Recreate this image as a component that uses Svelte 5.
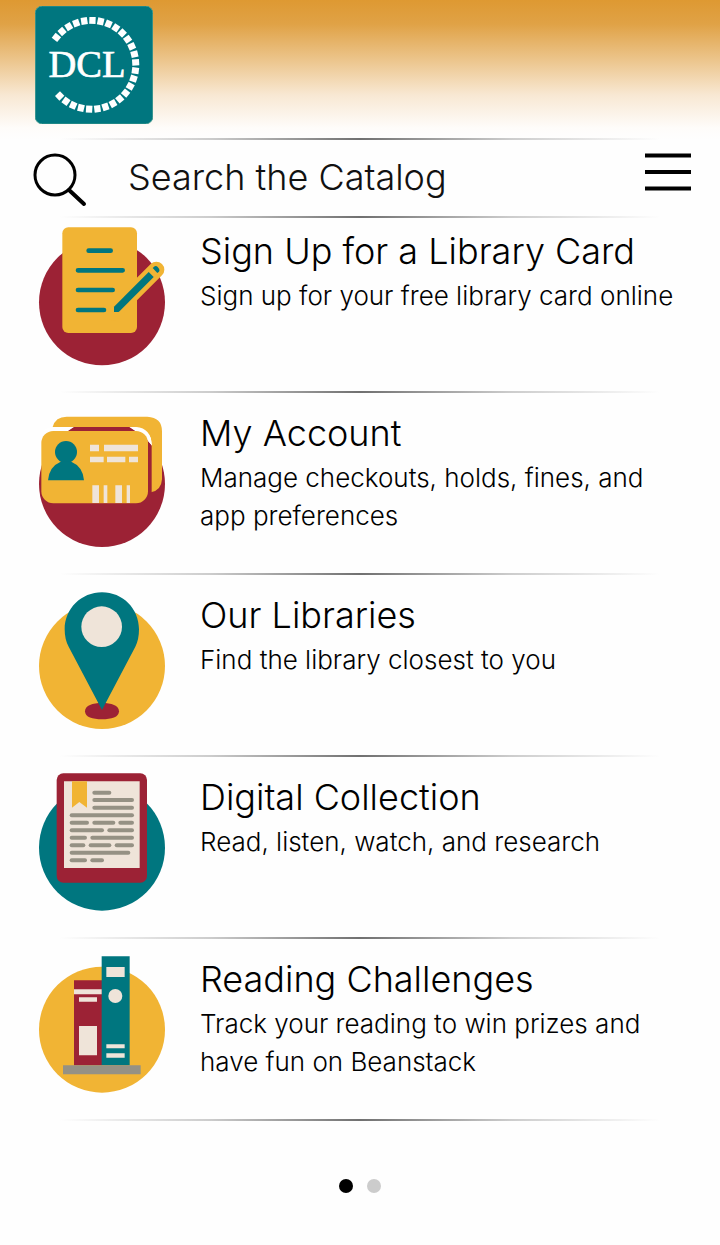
<script>
  const items = [
    { icon: 'form', title: 'Sign Up for a Library Card', text: 'Sign up for your free library card online' },
    { icon: 'cards', title: 'My Account', text: 'Manage checkouts, holds, fines, and app preferences' },
    { icon: 'pin', title: 'Our Libraries', text: 'Find the library closest to you' },
    { icon: 'reader', title: 'Digital Collection', text: 'Read, listen, watch, and research' },
    { icon: 'books', title: 'Reading Challenges', text: 'Track your reading to win prizes and have fun on Beanstack' }
  ];
  const discs = { form: '#9c2235', cards: '#9c2235', pin: '#f1b434', reader: '#00767f', books: '#f1b434' };

  const ring = Array.from({ length: 27 }, (_, i) => -141.7 + i * 10.67);

  const lines = [
    [193, 82, 238], [193, 104, 306], [193, 127, 306], [125, 150, 306],
    [125, 172, 171], [193, 172, 250], [271, 172, 306],
    [125, 195, 216], [238, 195, 306],
    [125, 217, 165], [187, 217, 306],
    [125, 240, 160], [182, 240, 238], [260, 240, 306],
    [125, 262, 295], [125, 285, 165], [187, 285, 216]
  ];
</script>

<div class="page">
  <header>
    <a class="logo" href="#home" aria-label="DCL home">
      <svg viewBox="45 16 354 355" width="118" height="118">
        <rect x="45" y="16" width="354" height="355" rx="22" fill="#00767f" stroke="#3f9a90" stroke-width="3" />
        {#each ring as a}
          <rect x="337" y="183" width="21" height="19" fill="#fff" transform="rotate({a} 214 193)" />
        {/each}
        <text x="201" y="230" text-anchor="middle" fill="#fff" stroke="#fff" stroke-width="2">DCL</text>
      </svg>
    </a>
  </header>

  <div class="rule"></div>
  <form class="search" role="search" onsubmit={(e) => e.preventDefault()}>
    <button class="find" aria-label="Search">
      <svg viewBox="0 0 54 54" width="54" height="54" fill="none" stroke="#000">
        <circle cx="22" cy="22" r="20" stroke-width="3" />
        <path d="M36 37L51 51" stroke-width="4" stroke-linecap="round" />
      </svg>
    </button>
    <input type="text" aria-label="Search the Catalog" placeholder="Search the Catalog" />
    <button class="menu" type="button" aria-label="Menu">
      <svg viewBox="0 0 46 38" width="46" height="38" stroke="#000" stroke-width="4">
        <path d="M0 2.500H46M0 19H46M0 35.500H46" />
      </svg>
    </button>
  </form>
  <div class="rule"></div>

  <main>
    {#each items as item}
      <a class="item" href="#{item.icon}">
        {#if item.icon === 'form'}
          <svg class="icon" viewBox="0 0 450 450">
            <circle cx="216" cy="247" r="189" fill={discs.form} />
            <rect x="97" y="22" width="224" height="317" rx="18" fill="#f1b434" />
            <path d="M250 278L379 149" stroke="#f1b434" stroke-width="48" stroke-linecap="round" />
            <g stroke="#00767f" stroke-width="14" stroke-linecap="round">
              <path d="M176 92H242M144 151H278M144 210H248M144 270H222" />
            </g>
            <path d="M252 260L356 156L371 171L267 275Q265 276 262 276H252Z" fill="#00767f" />
            <path d="M368 144L374 139Q379 137 383 141L387 146Q390 151 387 155L382 159Z" fill="#00767f" />
          </svg>
        {:else if item.icon === 'cards'}
          <svg class="icon" viewBox="0 -10 450 450">
            <circle cx="216" cy="236" r="189" fill={discs.cards} />
            <path d="M68 65Q76 34 110 34H352Q396 36 396 78V222Q394 255 363 261V100Q350 66 300 65Z" fill="#f1b434" />
            <path d="M40 78Q52 66 68 65H132L115 78Z" fill="#fff" />
            <path d="M132 65H300L318 78H113Z" fill="#9c2235" />
            <path d="M298 65H318Q364 68 366 122L352 105L316 77Z" fill="#fff" />
            <path d="M350 103L365 121V262L350 270Z" fill="#9c2235" />
            <rect x="34" y="77" width="320" height="217" rx="36" fill="#f1b434" />
            <circle cx="108" cy="140" r="33" fill="#00767f" />
            <path d="M54 225Q57 184 92 169H124Q159 184 162 225Z" fill="#00767f" />
            <path d="M180 118h27v20h-27zM222 118h102v20H222zM180 154h41v17h-41zM231 154h55v17h-55zM297 154h27v17h-27zM187 240h20v53h-20zM221 240h11v53h-11zM256 240h20v53h-20zM290 240h10v53h-10z" fill="#efe4d9" />
          </svg>
        {:else if item.icon === 'pin'}
          <svg class="icon" viewBox="0 -4 450 450">
            <circle cx="216" cy="242" r="189" fill={discs.pin} />
            <path d="M165 378C165 360 188 353 216 353S267 360 267 378S244 402 216 402S165 396 165 378Z" fill="#9c2235" />
            <path d="M216 374L116 184Q104 163 104 132C104 70 154 21 216 21S327 70 327 132Q327 163 316 184Z" fill="#00767f" />
            <circle cx="215" cy="124" r="61" fill="#efe4d9" />
          </svg>
        {:else if item.icon === 'reader'}
          <svg class="icon" viewBox="0 2 450 450">
            <circle cx="216" cy="247" r="189" fill={discs.reader} />
            <rect x="80" y="24" width="271" height="328" rx="20" fill="#9c2235" />
            <path d="M102 48H329V308H102Z" fill="#efe4d9" />
            <path d="M126 48H171V127L148 110L126 127Z" fill="#f1b434" />
            <g stroke="#959184" stroke-width="12" stroke-linecap="round">
              {#each lines as [x, y, x2]}
                <path d="M{x} {y}H{x2}" />
              {/each}
            </g>
          </svg>
        {:else}
          <svg class="icon" viewBox="0 5 450 450">
            <circle cx="216" cy="250" r="189" fill={discs.books} />
            <path d="M132 102H216V357H132Z" fill="#9c2235" />
            <path d="M215 30H299V357H215Z" fill="#00767f" />
            <path d="M99 357H332V384H99Z" fill="#959184" />
            <path d="M132 129h83v15h-83zM147 153h54v13h-54zM147 239h54v88h-54zM229 62h55v30h-55zM229 294h55v12h-55zM229 321h55v13h-55z" fill="#efe4d9" />
            <circle cx="256" cy="149" r="21" fill="#efe4d9" />
          </svg>
        {/if}
        <div class="copy">
          <h2>{item.title}</h2>
          <p>{item.text}</p>
        </div>
      </a>
      <div class="rule"></div>
    {/each}
  </main>

  <nav class="dots" aria-label="Pages">
    <button class="on" aria-label="Page 1"></button>
    <button aria-label="Page 2"></button>
  </nav>
</div>

<style>
  :global(body) {
    margin: 0;
    background: #fefefe;
  }
  .page {
    min-height: 100vh;
    box-sizing: border-box;
    color: #000;
    font-family: Inter, 'Liberation Sans', sans-serif;
    font-weight: 300;
    background: linear-gradient(#de9932 0, #e0a246 24px, #ecc58c 60px, #f8e8d3 95px, #fefcfa 128px, #fefefe 140px);
  }
  header {
    height: 132px;
    padding: 6px 35px 0;
  }
  .logo {
    display: block;
    width: 118px;
  }
  .logo svg {
    display: block;
  }
  .logo text {
    font-family: 'Liberation Serif', serif;
    font-size: 116px;
    font-weight: 400;
  }
  .rule {
    height: 2px;
    margin: 0 60px;
    background: linear-gradient(90deg, transparent, #ccc 25%, #707070 50%, #ccc 75%, transparent);
  }
  .search {
    display: flex;
    align-items: flex-start;
    height: 76px;
    padding: 0 29px 0 33px;
  }
  button {
    padding: 0;
    border: 0;
    background: none;
  }
  button svg {
    display: block;
  }
  .find,
  .menu {
    margin-top: 13px;
  }
  input {
    flex: 1;
    min-width: 0;
    height: 74px;
    margin: 0;
    padding: 0 0 0 41px;
    border: 0;
    outline: 0;
    background: none;
    color: #111;
    font: inherit;
    font-size: 36px;
  }
  input::placeholder {
    color: #111;
    opacity: 1;
  }
  .item {
    display: flex;
    gap: 20px;
    min-height: 171px;
    padding: 9px 40px 0 30px;
    color: inherit;
    text-decoration: none;
  }
  .item:first-child {
    padding-top: 2px;
  }
  .icon {
    flex: none;
    width: 150px;
    height: 150px;
  }
  .copy {
    flex: 1;
    padding-top: 5px;
  }
  h2 {
    margin: 0;
    font-size: 36px;
    font-weight: 300;
    line-height: 52px;
  }
  p {
    margin: 0;
    font-size: 26px;
    line-height: 38px;
  }
  .dots {
    display: flex;
    justify-content: center;
    gap: 14px;
    padding: 58px 0 52px;
  }
  .dots button {
    width: 14px;
    height: 14px;
    border-radius: 50%;
    background: #ccc;
  }
  .dots .on {
    background: #000;
  }
</style>
